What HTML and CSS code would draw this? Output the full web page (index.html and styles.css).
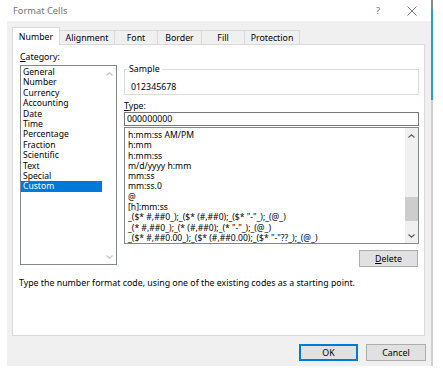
FILE: index.html
```html
<!DOCTYPE html>
<html lang="en">
<head>
  <meta charset="UTF-8">
  <title>Format Cells</title>
  <link rel="stylesheet" href="styles.css">
</head>
<body>
  <div class="window">
    <div class="titlebar">
      <span class="title">Format Cells</span>
      <span class="help">?</span>
      <svg class="close" width="10" height="10" viewBox="0 0 10 10"><path d="M0.5 0.5L9.5 9.5M9.5 0.5L0.5 9.5" stroke="#7a7a7a" stroke-width="1" fill="none"/></svg>
    </div>
    <div class="dialog">
      <div class="tabs">
        <div class="tab active w48">Number</div>
        <div class="tab w55">Alignment</div>
        <div class="tab w43">Font</div>
        <div class="tab w44">Border</div>
        <div class="tab w43">Fill</div>
        <div class="tab w55">Protection</div>
      </div>
      <div class="page">
        <div class="cols">
          <div class="category">
            <div class="label"><u>C</u>ategory:</div>
            <div class="listbox cat-list">
              <ul class="items">
                <li>General</li><li>Number</li><li>Currency</li><li>Accounting</li><li>Date</li><li>Time</li>
                <li>Percentage</li><li>Fraction</li><li>Scientific</li><li>Text</li><li>Special</li><li class="sel">Custom</li>
              </ul>
              <div class="scroll disabled">
                <div class="arrow up"><svg width="7" height="4" viewBox="0 0 7 4"><path d="M0.5 3.5L3.5 0.8L6.5 3.5" stroke="currentColor" stroke-width="1.2" fill="none"/></svg></div>
                <div class="track"></div>
                <div class="arrow down"><svg width="7" height="4" viewBox="0 0 7 4"><path d="M0.5 0.5L3.5 3.2L6.5 0.5" stroke="currentColor" stroke-width="1.2" fill="none"/></svg></div>
              </div>
            </div>
          </div>
          <div class="right">
            <fieldset class="sample">
              <legend>Sample</legend>
              <div class="sample-value">012345678</div>
            </fieldset>
            <div class="label type-label"><u>T</u>ype:</div>
            <input class="type-input" type="text" value="000000000">
            <div class="listbox type-list">
              <ul class="items">
                <li>h:mm:ss AM/PM</li>
                <li>h:mm</li>
                <li>h:mm:ss</li>
                <li>m/d/yyyy h:mm</li>
                <li>mm:ss</li>
                <li>mm:ss.0</li>
                <li>@</li>
                <li>[h]:mm:ss</li>
                <li>_($* #,##0_);_($* (#,##0);_($* "-"_);_(@_)</li>
                <li>_(* #,##0_);_(* (#,##0);_(* "-"_);_(@_)</li>
                <li>_($* #,##0.00_);_($* (#,##0.00);_($* "-"??_);_(@_)</li>
              </ul>
              <div class="scroll">
                <div class="arrow up"><svg width="7" height="4" viewBox="0 0 7 4"><path d="M0.5 3.5L3.5 0.8L6.5 3.5" stroke="currentColor" stroke-width="1.2" fill="none"/></svg></div>
                <div class="track"><div class="thumb"></div></div>
                <div class="arrow down"><svg width="7" height="4" viewBox="0 0 7 4"><path d="M0.5 0.5L3.5 3.2L6.5 0.5" stroke="currentColor" stroke-width="1.2" fill="none"/></svg></div>
              </div>
            </div>
            <button class="btn delete"><u>D</u>elete</button>
          </div>
        </div>
        <p class="hint">Type the number format code, using one of the existing codes as a starting point.</p>
      </div>
      <div class="actions">
        <button class="btn ok">OK</button>
        <button class="btn">Cancel</button>
      </div>
    </div>
  </div>
  <div class="edge"></div>
</body>
</html>
```
FILE: styles.css
```css
:root{--face:#f0f0f0;--line:#d9d9d9;--box:#828790;--accent:#0078d7;--btn:#e1e1e1;--btn-line:#adadad}
body{margin:0;display:flex;height:372px;overflow:hidden;background:#fff;font-family:'Noto Sans',sans-serif;font-size:8.8px;color:#000}
.window{width:431px}
.edge{width:2px;height:366px;background:linear-gradient(#8a8a8a 0 9px,#2b9bd0 9px 100px,#cfcfcf 100px)}
.titlebar{height:21px;display:flex;align-items:center;padding-left:13px;color:#737373;font-size:9.3px}
.titlebar .title{flex:1}
.help{margin-right:27px}
.close{margin-right:14px}
.dialog{margin-left:7px;height:345px;background:var(--face);padding:6px 5px 0 5px;box-sizing:border-box}
.tabs{display:flex;align-items:flex-end;height:17px}
.tab{height:14px;box-sizing:border-box;border:1px solid var(--line);border-bottom:none;border-left:none;display:flex;align-items:center;justify-content:center;background:var(--face)}
.tab.active{height:18px;margin-bottom:-1px;background:#fff;border-left:1px solid var(--line);position:relative;z-index:1}
.w48{width:48px}.w55{width:55px}.w43{width:43px}.w44{width:44px}
.page{width:413px;height:292px;box-sizing:border-box;border:1px solid var(--line);background:#fff;padding:7px 5px 0 7px}
.cols{display:flex;gap:7px;align-items:flex-start}
.category{width:97px}
.label{line-height:10px}
.listbox{border:1px solid var(--box);display:flex;box-sizing:border-box}
.items{list-style:none;margin:0;padding:1px 0 0 0;flex:1;overflow:hidden;white-space:nowrap;font-size:8.6px}
.cat-list{height:200px;margin-top:3px}
.cat-list li{line-height:10.4px;padding-left:2px}
.cat-list li.sel{background:var(--accent);color:#fff}
.scroll{width:13px;display:flex;flex-direction:column;background:var(--face);color:#606060}
.scroll.disabled{width:14px;background:#fff;color:#c6c6c6}
.arrow{height:15px;display:flex;align-items:center;justify-content:center}
.arrow.down{height:14px}
.track{flex:1}
.thumb{margin-top:54px;height:24px;background:#cdcdcd}
.right{width:295px;padding-top:12px;display:flex;flex-direction:column}
.sample{margin:0;padding:8px 4px 2px 2px;border:1px solid #dcdcdc;min-width:0}
.sample legend{padding:0 2px;line-height:10px}
.sample-value{line-height:10px;padding-left:4px}
.type-label{margin-top:6px}
.type-input{display:block;margin:1px 0 0;width:100%;height:14px;box-sizing:border-box;border:1px solid #7a7a7a;padding:0 2px;font:inherit;color:#000;outline:none}
.type-list{height:117px;margin-top:1px}
.type-list .items{padding:2px 0 0 3px}
.type-list li{line-height:10.3px}
.btn{font:inherit;color:#000;background:var(--btn);border:1px solid var(--btn-line);height:17px;box-sizing:border-box;padding:0}
.delete{align-self:flex-end;width:59px;margin:6px 1px 0 0}
.hint{margin:11px 0 0 -1px;line-height:10px}
.actions{display:flex;justify-content:flex-end;gap:8px;margin-top:8px}
.actions .btn{width:60px}
.actions .ok{width:59px;border:2px solid var(--accent)}
```
